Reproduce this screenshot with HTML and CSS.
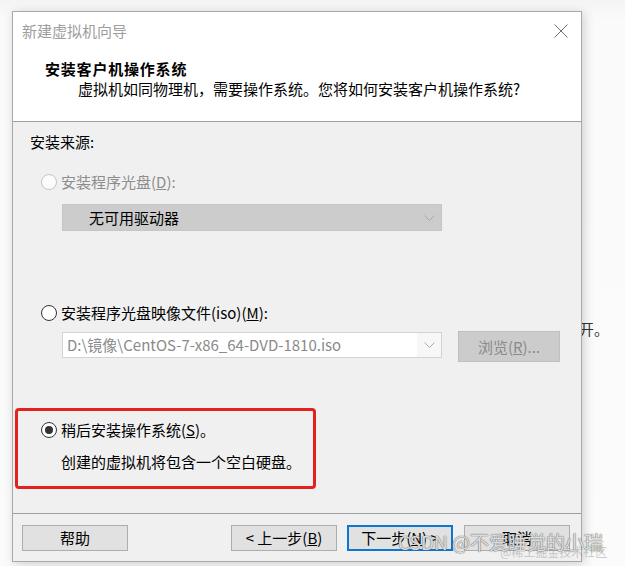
FILE: index.html
```html
<!DOCTYPE html>
<html lang="zh-CN">
<head>
<meta charset="utf-8">
<title>新建虚拟机向导</title>
<link rel="stylesheet" href="styles.css">
</head>
<body>
<div class="page">
  <div class="stray">开。</div>
  <div class="dialog">
    <div class="header">
      <div class="titlebar">
        <span class="title">新建虚拟机向导</span>
        <svg class="close" width="14" height="14" viewBox="0 0 14 14"><path d="M0.5 0.5 L13.5 13.5 M13.5 0.5 L0.5 13.5" stroke="#707070" stroke-width="1" fill="none"/></svg>
      </div>
      <div class="heading">安装客户机操作系统</div>
      <div class="subtitle">虚拟机如同物理机，需要操作系统。您将如何安装客户机操作系统?</div>
    </div>
    <div class="body">
      <div class="section-label">安装来源:</div>
      <div class="option disabled"><span class="radio"></span><span>安装程序光盘(<u>D</u>):</span></div>
      <div class="select select-disabled">
        <span class="select-text">无可用驱动器</span>
        <svg class="chev" width="11" height="6" viewBox="0 0 11 6"><path d="M0.5 0.5 L5.5 5.5 L10.5 0.5" stroke="#a8a8a8" fill="none"/></svg>
      </div>
      <div class="option option-iso"><span class="radio"></span><span>安装程序光盘映像文件(iso)(<u>M</u>):</span></div>
      <div class="iso-row">
        <div class="combo">
          <span class="combo-text">D:\镜像\CentOS-7-x86_64-DVD-1810.iso</span>
          <span class="combo-btn"><svg width="11" height="6" viewBox="0 0 11 6"><path d="M0.5 0.5 L5.5 5.5 L10.5 0.5" stroke="#a8a8a8" fill="none"/></svg></span>
        </div>
        <div class="browse">浏览(<u>R</u>)...</div>
      </div>
      <div class="highlight">
        <div class="option"><span class="radio checked"></span><span>稍后安装操作系统(<u>S</u>)。</span></div>
        <div class="desc">创建的虚拟机将包含一个空白硬盘。</div>
      </div>
    </div>
    <div class="footer">
      <div class="btn">帮助</div>
      <div class="spacer"></div>
      <div class="btn">&lt; 上一步(<u>B</u>)</div>
      <div class="btn btn-default">下一步(<u>N</u>) &gt;</div>
      <div class="btn">取消</div>
    </div>
  </div>
  <div class="watermark2">@稀土掘金技术社区</div>
  <div class="watermark">CSDN @不爱睡觉的小瑞</div>
</div>
</body>
</html>
```
FILE: styles.css
```css
* { box-sizing: border-box; }
html, body {
  margin: 0;
  padding: 0;
  background: #ffffff;
}
body {
  font-family: "Noto Sans CJK SC", "Noto Sans", sans-serif;
  font-size: 15px;
  color: #000;
  width: 625px;
  height: 566px;
  overflow: hidden;
}
.page {
  position: relative;
  width: 625px;
  height: 566px;
  padding: 11px 0 0 12px;
  background: linear-gradient(#f4f4f4, #fafafa 20px, #fbfbfb);
}
.stray {
  position: absolute;
  left: 579px;
  top: 318px;
  line-height: 22px;
  color: #333;
  font-size: 15px;
}
.dialog {
  position: relative;
  width: 570px;
  height: 551px;
  border: 1px solid #a9a9a9;
  background: #f0f0f0;
  box-shadow: 2px 2px 10px rgba(0,0,0,0.18);
  display: flex;
  flex-direction: column;
}
.header {
  height: 110px;
  background: #fff;
  border-bottom: 1px solid #a0a0a0;
  padding-top: 9px;
}
.titlebar {
  display: flex;
  align-items: center;
  justify-content: space-between;
  padding: 0 13px 0 9px;
  height: 20px;
}
.title {
  color: #9e9e9e;
  line-height: 20px;
}
.close { display: block; margin-top: -1px; }
.heading {
  margin-top: 18px;
  padding-left: 32px;
  font-weight: bold;
  line-height: 20px;
  letter-spacing: 0.8px;
}
.subtitle {
  padding-left: 65px;
  line-height: 20px;
}
.body {
  height: 391px;
  padding-top: 10px;
}
.section-label {
  margin-left: 17px;
  line-height: 20px;
}
.option {
  display: flex;
  align-items: center;
  gap: 4px;
  margin-left: 28px;
  line-height: 20px;
}
.option.disabled {
  margin-top: 20px;
  color: #8d8d8d;
}
.radio {
  width: 16px;
  height: 16px;
  border-radius: 50%;
  border: 1px solid #333;
  background: #fff;
  display: flex;
  align-items: center;
  justify-content: center;
  flex: none;
}
.disabled .radio {
  border-color: #c4c4c4;
  background: #fcfcfc;
}
.radio.checked::after {
  content: "";
  width: 8px;
  height: 8px;
  border-radius: 50%;
  background: #333;
}
.select {
  margin: 12px 0 0 49px;
  width: 380px;
  height: 27px;
  display: flex;
  align-items: center;
  justify-content: space-between;
  padding: 0 6px 0 26px;
}
.select-disabled {
  background: #cccccc;
  border: 1px solid #c6c6c6;
}
.chev { display: block; }
.option-iso {
  margin-top: 72px;
}
.iso-row {
  margin: 8px 0 0 49px;
  display: flex;
  align-items: flex-start;
}
.combo {
  margin-top: 1px;
  width: 380px;
  height: 26px;
  border: 1px solid #d3d3d3;
  background: #fff;
  display: flex;
  align-items: stretch;
}
.combo-text {
  flex: 1;
  color: #8a8a8a;
  padding-left: 4px;
  line-height: 24px;
  white-space: nowrap;
  overflow: hidden;
}
.combo-btn {
  width: 24px;
  background: #f7f7f7;
  display: flex;
  align-items: center;
  justify-content: center;
}
.browse {
  margin-left: 16px;
  width: 102px;
  height: 31px;
  background: #cccccc;
  border: 1px solid #bfbfbf;
  color: #8a8a8a;
  display: flex;
  align-items: center;
  justify-content: center;
}
.highlight {
  margin: 46px 0 0 2px;
  width: 301px;
  height: 81px;
  border: 3px solid #e3221f;
  border-radius: 4px;
  padding-top: 9px;
}
.highlight .option {
  margin-left: 23px;
}
.desc {
  margin: 12px 0 0 43px;
  line-height: 20px;
}
.footer {
  height: 48px;
  border-top: 1px solid #a0a0a0;
  display: flex;
  align-items: flex-start;
  padding: 11px 11px 0 9px;
  gap: 10px;
}
.spacer { flex: 1; }
.btn {
  width: 106px;
  height: 26px;
  background: #e1e1e1;
  border: 1px solid #adadad;
  display: flex;
  align-items: center;
  justify-content: center;
  line-height: 20px;
}
.btn-default {
  border: 2px solid #0f75d2;
}
.btn-default + .btn { margin-left: 1px; }
.watermark {
  position: absolute;
  left: 398px;
  top: 529px;
  font-size: 19px;
  line-height: 26px;
  color: rgba(255,255,255,0.8);
  text-shadow: 0 0 1px rgba(90,90,90,0.9), 0 0 1px rgba(90,90,90,0.9);
  white-space: nowrap;
}
.watermark2 {
  position: absolute;
  left: 500px;
  top: 544px;
  font-size: 12px;
  line-height: 16px;
  color: rgba(140,140,140,0.45);
  white-space: nowrap;
}
```
